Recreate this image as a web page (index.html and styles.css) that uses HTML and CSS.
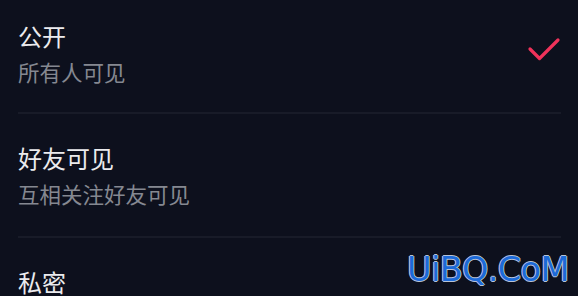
FILE: index.html
```html
<!DOCTYPE html>
<html lang="zh-CN">
<head>
<meta charset="utf-8">
<link rel="stylesheet" href="styles.css">
</head>
<body>
<div class="screen">
  <ul class="options">
    <li class="option">
      <div class="text">
        <div class="title">公开</div>
        <div class="desc">所有人可见</div>
      </div>
      <svg class="check" width="34" height="28" viewBox="0 0 34 28"><polyline points="3,13 12.5,22.5 31,4" fill="none" stroke="#f0325a" stroke-width="3.2" stroke-linecap="round" stroke-linejoin="round"/></svg>
    </li>
    <li class="option">
      <div class="text">
        <div class="title">好友可见</div>
        <div class="desc">互相关注好友可见</div>
      </div>
    </li>
    <li class="option">
      <div class="text">
        <div class="title">私密</div>
      </div>
    </li>
  </ul>
  <div class="watermark">UiBQ.CoM</div>
</div>
</body>
</html>
```
FILE: styles.css
```css
html, body {
  margin: 0;
  padding: 0;
  background: #0d101d;
}
.screen {
  position: relative;
  width: 578px;
  height: 296px;
  overflow: hidden;
  background: #0d101d;
  font-family: "Noto Sans CJK SC", "Noto Sans", sans-serif;
}
.options {
  list-style: none;
  margin: 0;
  padding: 0 17px 0 18px;
}
.option {
  display: flex;
  align-items: center;
  justify-content: space-between;
  padding: 29px 0 28px 0;
  border-bottom: 2px solid #181b28;
}
.option:first-child {
  padding-top: 21px;
  padding-bottom: 26px;
}
.option:last-child {
  border-bottom: none;
  padding-bottom: 0;
}
.text {
  display: flex;
  flex-direction: column;
  gap: 7px;
}
.title {
  font-size: 24px;
  line-height: 30px;
  color: #ebebee;
}
.desc {
  font-size: 21.5px;
  line-height: 28px;
  color: #858891;
}
.check {
  margin-top: -8px;
}
.watermark {
  position: absolute;
  left: 407px;
  top: 249px;
  font-family: "DejaVu Sans", sans-serif;
  font-size: 33.5px;
  line-height: 42px;
  letter-spacing: -0.6px;
  color: #1c6ad8;
  text-shadow: 1px 0 0 #b9c3d6, -1px 0 0 #b9c3d6, 0 1px 0 #b9c3d6, 0 -1px 0 #b9c3d6;
}
```
